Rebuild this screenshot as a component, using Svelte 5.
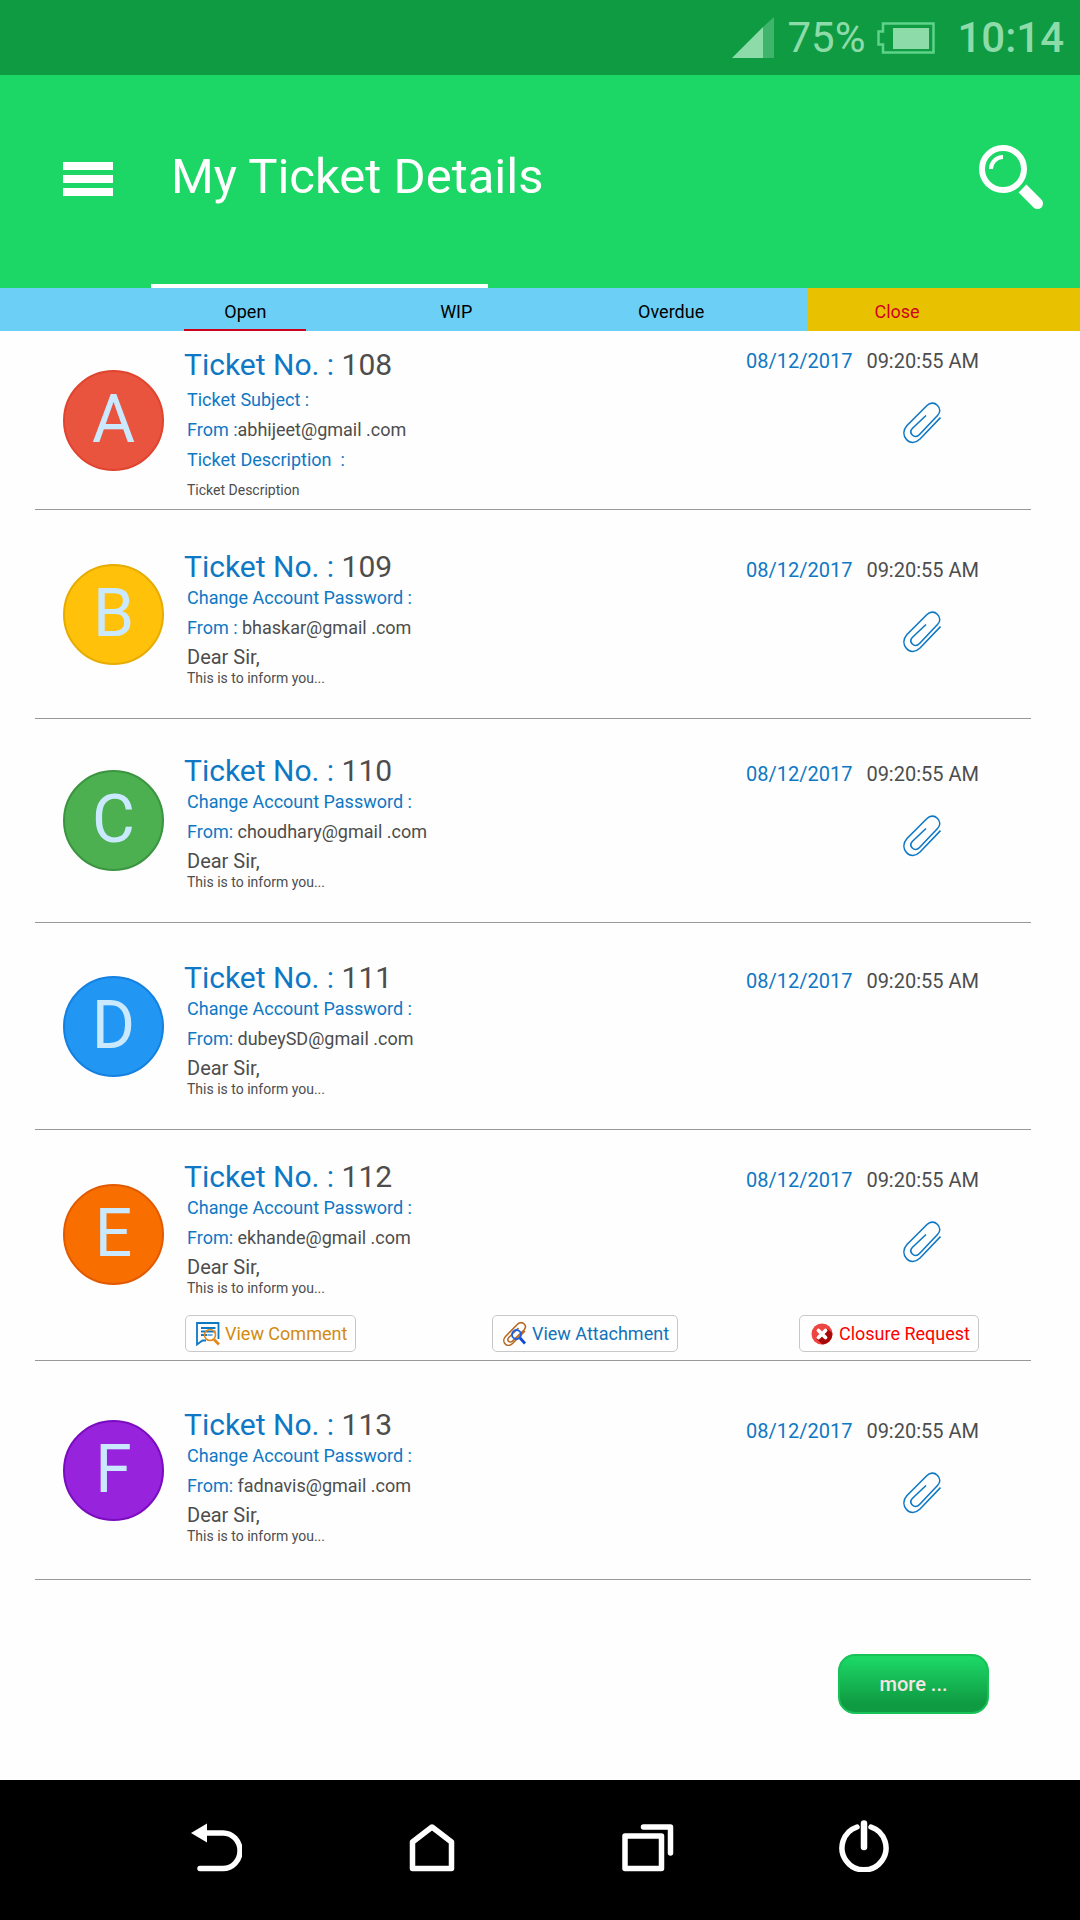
<!-- MyTickets.svelte -->
<script>
    const tabs = [
        { id: 'open', label: 'Open' },
        { id: 'wip', label: 'WIP' },
        { id: 'overdue', label: 'Overdue' },
        { id: 'close', label: 'Close' }
    ];

    let activeTab = $state('open');

    const tickets = [
        {
            no: 108, letter: 'A', date: '08/12/2017', time: '09:20:55 AM',
            subject: 'Ticket Subject :', fromLabel: 'From :', from: 'abhijeet@gmail .com',
            descLabel: 'Ticket Description\u00a0 :', text: 'Ticket Description', attachment: true
        },
        {
            no: 109, letter: 'B', date: '08/12/2017', time: '09:20:55 AM',
            subject: 'Change Account Password :', fromLabel: 'From : ', from: 'bhaskar@gmail .com',
            greeting: 'Dear Sir,', text: 'This is to inform you...', attachment: true
        },
        {
            no: 110, letter: 'C', date: '08/12/2017', time: '09:20:55 AM',
            subject: 'Change Account Password :', fromLabel: 'From: ', from: 'choudhary@gmail .com',
            greeting: 'Dear Sir,', text: 'This is to inform you...', attachment: true
        },
        {
            no: 111, letter: 'D', date: '08/12/2017', time: '09:20:55 AM',
            subject: 'Change Account Password :', fromLabel: 'From: ', from: 'dubeySD@gmail .com',
            greeting: 'Dear Sir,', text: 'This is to inform you...', attachment: false
        },
        {
            no: 112, letter: 'E', date: '08/12/2017', time: '09:20:55 AM',
            subject: 'Change Account Password :', fromLabel: 'From: ', from: 'ekhande@gmail .com',
            greeting: 'Dear Sir,', text: 'This is to inform you...', attachment: true, actions: true
        },
        {
            no: 113, letter: 'F', date: '08/12/2017', time: '09:20:55 AM',
            subject: 'Change Account Password :', fromLabel: 'From: ', from: 'fadnavis@gmail .com',
            greeting: 'Dear Sir,', text: 'This is to inform you...', attachment: true
        }
    ];
</script>

<div class="screen">
    <div class="status-bar">
        <svg width="42" height="42" viewBox="0 0 42 42" aria-hidden="true">
            <path d="M0 41 L31 10 V41 Z" fill="#8edbaa" />
            <path d="M31 10 L42 0 V41 H31 Z" fill="#3fb56b" />
        </svg>
        <span class="percent">75%</span>
        <svg class="battery" width="58" height="32" viewBox="0 0 58 32" aria-hidden="true">
            <path d="M6 1.5 H56.5 V30.5 H6 V22.5 H1.5 V9.5 H6 Z" fill="none" stroke="#5fd38b" stroke-width="2.5" />
            <rect x="16" y="6" width="36" height="21" fill="#8edbaa" />
        </svg>
        <span class="clock">10:14</span>
    </div>

    <header>
        <div class="header-row">
            <button type="button" class="menu" aria-label="Menu">
                <svg width="50" height="34" viewBox="0 0 50 34" fill="#fff">
                    <rect width="50" height="8" />
                    <rect y="13" width="50" height="8" />
                    <rect y="26" width="50" height="8" />
                </svg>
            </button>
            <h1>My Ticket Details</h1>
            <button type="button" aria-label="Search">
                <svg width="65" height="65" viewBox="0 0 65 65" fill="none" stroke="#fff">
                    <circle cx="24" cy="24" r="21" stroke-width="6" />
                    <path d="M12 24 A12 12 0 0 1 24 12" stroke-width="4" />
                    <path d="M43.5 43.5 L58 58" stroke-width="11" />
                    <circle cx="58.5" cy="58.5" r="5.5" fill="#fff" stroke="none" />
                </svg>
            </button>
        </div>
        <div class="header-line"></div>
    </header>

    <nav class="tabs" aria-label="Ticket status">
        {#each tabs as tab}
            <button
                type="button"
                class="tab {tab.id}"
                class:active={activeTab === tab.id}
                onclick={() => (activeTab = tab.id)}
            >
                <span>{tab.label}</span>
            </button>
        {/each}
    </nav>

    <main>
        <ul class="tickets">
            {#each tickets as ticket}
                <li
                    class="ticket ticket-{ticket.letter.toLowerCase()}"
                    class:detailed={ticket.descLabel}
                    class:has-actions={ticket.actions}
                >
                    <div class="avatar">{ticket.letter}</div>
                    <div class="info">
                        <h2>Ticket No. : <span>{ticket.no}</span></h2>
                        <div class="lines">
                            <p class="label">{ticket.subject}</p>
                            <p class="label">{ticket.fromLabel}<span>{ticket.from}</span></p>
                            {#if ticket.descLabel}
                                <p class="label">{ticket.descLabel}</p>
                            {/if}
                            {#if ticket.greeting}
                                <p class="greeting">{ticket.greeting}</p>
                            {/if}
                            <p class="message">{ticket.text}</p>
                        </div>
                    </div>
                    <div class="meta">
                        <div class="when">
                            <span class="date">{ticket.date}</span>
                            <span>{ticket.time}</span>
                        </div>
                        {#if ticket.attachment}
                            <svg class="clip" width="38" height="42" viewBox="0 0 38 42" role="img" aria-label="Has attachment">
                                <path
                                    d="M37.5 15.5 L17 37 C12.5 41.5 7 41.5 3.5 37.5 C0 33.5 0 28 4 23.5 L24 3.5 C27 .5 31.5 .2 34.3 3.3 C37.5 6.5 37.5 10.5 34.5 13.5 L16.5 32.5 C14 35.2 11.3 35 9.3 33 C7.3 31 7.3 28.5 9.5 26.2 L23 13.5"
                                    fill="none" stroke="#0f78c4" stroke-width="1.6"
                                />
                            </svg>
                        {/if}
                    </div>
                    {#if ticket.actions}
                        <div class="actions">
                            <button type="button" class="comment">
                                <svg width="24" height="24" viewBox="0 0 24 24" fill="none">
                                    <path d="M22.5 17 V1 H1 V22.5 L6.5 18.5 H10" stroke="#0f78c4" stroke-width="1.8" />
                                    <path d="M5 6 H19.5 M5 9.5 H19.5 M5 13 H11" stroke="#0f78c4" stroke-width="1.8" />
                                    <circle cx="14" cy="13" r="5.5" stroke="#e08a1e" stroke-width="1.6" />
                                    <path d="M11.5 13 H16.5" stroke="#0f78c4" stroke-width="1.2" />
                                    <path d="M18 17.5 L23 22.5" stroke="#e08a1e" stroke-width="2.8" />
                                </svg>
                                View Comment
                            </button>
                            <button type="button" class="attachment">
                                <svg width="24" height="24" viewBox="0 0 24 24" fill="none">
                                    <path
                                        d="M22 9 L9.5 21.5 C7 24 4 24 2.3 22 C.3 20 .3 16.8 2.5 14.5 L14.5 2.2 C16.5 .2 19.5 .2 21 1.8 C22.8 3.5 22.8 6 21 8 L9.5 19 C8 20.5 6.5 20.3 5.5 19.3 C4.5 18.3 4.5 16.8 5.8 15.5 L15.5 6"
                                        stroke="#b5651d" stroke-width="1.5"
                                    />
                                    <circle cx="13.5" cy="12.5" r="4.5" stroke="#1660e8" stroke-width="1.8" />
                                    <path d="M17 16 L22 21.5" stroke="#1048d8" stroke-width="2.8" />
                                </svg>
                                View Attachment
                            </button>
                            <button type="button" class="closure">
                                <svg width="24" height="24" viewBox="0 0 24 24">
                                    <circle cx="12" cy="12" r="10.5" fill="#ee4540" />
                                    <path d="M17.5 7 L22.3 11 A10.5 10.5 0 0 1 12.5 22.5 L6.5 17 Z" fill="#a80808" />
                                    <path d="M8.5 8.5 L15.5 15.5 M15.5 8.5 L8.5 15.5" stroke="#fff" stroke-width="3.8" stroke-linecap="round" />
                                </svg>
                                Closure Request
                            </button>
                        </div>
                    {/if}
                </li>
            {/each}
        </ul>
        <button type="button" class="more">more ...</button>
    </main>

    <nav class="system-nav" aria-label="System">
        <button type="button" aria-label="Back">
            <svg width="52" height="52" viewBox="0 0 52 52" fill="none" stroke="#fff" stroke-width="5.5" stroke-linecap="round">
                <path d="M16 13 H33 A17 17.7 0 0 1 33 48.5 H10" />
                <path d="M1 13 L17 3.5 V22.5 Z" fill="#fff" stroke="none" />
            </svg>
        </button>
        <button type="button" aria-label="Home">
            <svg width="52" height="52" viewBox="0 0 52 52" fill="none" stroke="#fff" stroke-width="5.5" stroke-linejoin="round">
                <path d="M6.500 48.5 V22 L26 7 L45.5 22 V48.5 Z" />
            </svg>
        </button>
        <button type="button" aria-label="Recent apps">
            <svg width="52" height="52" viewBox="0 0 52 52" fill="none" stroke="#fff" stroke-width="5.5" stroke-linejoin="round" stroke-linecap="round">
                <rect x="3" y="16" width="36.5" height="32.5" />
                <path d="M21.5 7 H48.5 V33" />
            </svg>
        </button>
        <button type="button" aria-label="Power">
            <svg width="52" height="52" viewBox="0 0 52 52" fill="none" stroke="#fff" stroke-width="5.5" stroke-linecap="round">
                <path d="M19 7 A22 22 0 1 0 33 7" />
                <path d="M26 3.500 V27" stroke-width="6.5" />
            </svg>
        </button>
    </nav>
</div>

<style>
    :global(body) {
        background: #fefefe;
    }

    .screen {
        min-height: 100vh;
        display: flex;
        flex-direction: column;
        font-family: Roboto, 'Liberation Sans', sans-serif;
        color: #4d4d4d;
    }

    h1, h2, p, ul {
        margin: 0;
        padding: 0;
        font-weight: 400;
    }

    button {
        font-family: inherit;
        border: none;
        background: none;
        padding: 0;
        cursor: pointer;
    }

    svg {
        display: block;
        flex-shrink: 0;
    }

    .status-bar {
        display: flex;
        align-items: center;
        justify-content: flex-end;
        height: 75px;
        padding-right: 16px;
        background: #0f9b42;
        color: #8edbaa;
        font-size: 42px;
    }

    .percent {
        margin-left: 13px;
    }

    .battery {
        margin: 0 22px 0 12px;
    }

    .clock {
        font-weight: 500;
    }

    header {
        display: flex;
        flex-direction: column;
        height: 213px;
        background: #1cd666;
        color: #fff;
    }

    .header-row {
        display: flex;
        align-items: center;
        padding: 64px 36px 0 63px;
    }

    .menu {
        padding-top: 4px;
    }

    h1 {
        flex: 1;
        margin-left: 58px;
        font-size: 49px;
        line-height: 76px;
    }

    .header-line {
        width: 337px;
        height: 4px;
        margin: auto 0 0 14%;
        background: #fff;
    }

    .tabs {
        display: grid;
        grid-template-columns: 210fr 212fr 246fr 272fr;
        height: 43px;
        padding-left: 13%;
        background: #6ccff6;
    }

    .tab {
        display: flex;
        justify-content: center;
        font-size: 18px;
        color: #000;
    }

    .tab span {
        box-sizing: border-box;
        min-width: 122px;
        height: 43px;
        line-height: 48px;
    }

    .tab.active span {
        border-bottom: 2px solid #d0021b;
    }

    .tab.overdue {
        padding-right: 28px;
    }

    .tab.close {
        padding-right: 94px;
        background: #e8c200;
        color: #d0021b;
    }

    main {
        flex: 1;
        display: flex;
        flex-direction: column;
    }

    .tickets {
        margin: 0 49px 0 35px;
        list-style: none;
    }

    .ticket {
        display: grid;
        grid-template-columns: 101px 1fr auto;
        column-gap: 20px;
        padding: 0 52px 0 28px;
        border-bottom: 1px solid #999;
    }

    .avatar {
        align-self: center;
        box-sizing: border-box;
        width: 101px;
        height: 101px;
        border: 2px solid;
        border-radius: 50%;
        font-size: 66px;
        line-height: 96px;
        text-align: center;
    }

    h2 {
        font-size: 30px;
        line-height: 32px;
        color: #0f78c4;
    }

    h2 span,
    .label span {
        color: #4d4d4d;
    }

    .lines {
        padding-left: 3px;
    }

    .label {
        font-size: 18px;
        line-height: 30px;
        color: #0f78c4;
        white-space: pre-wrap;
    }

    .greeting {
        font-size: 20px;
        line-height: 28px;
    }

    .message {
        font-size: 14px;
        line-height: 14px;
    }

    .when {
        display: flex;
        gap: 14px;
        margin-top: 7px;
        font-size: 20px;
        line-height: 24px;
    }

    .date {
        color: #0f78c4;
    }

    .clip {
        margin: 29px 38px 0 auto;
    }

    .detailed .lines {
        padding-top: 4px;
    }

    .detailed .message {
        line-height: 30px;
    }

    .detailed .when {
        margin-top: 0;
    }

    .ticket-a .avatar { background: #e9543f; border-color: #e0442f; color: #cae9ff; }
    .ticket-b .avatar { background: #ffc10a; border-color: #e6ac00; color: #cae9ff; }
    .ticket-c .avatar { background: #4caf50; border-color: #3b9440; color: #cae9ff; }
    .ticket-d .avatar { background: #2196f3; border-color: #1481e0; color: #cae9ff; }
    .ticket-e .avatar { background: #f86f00; border-color: #e25a00; color: #cae9ff; }
    .ticket-f .avatar { background: #9823dc; border-color: #7a0cc0; color: #cae9ff; }

    .ticket-a .info, .ticket-a .meta { padding: 18px 0 4px; }
    .ticket-b .info, .ticket-b .meta { padding: 41px 0 33px; }
    .ticket-c .info, .ticket-c .meta { padding: 36px 0 33px; }
    .ticket-d .info, .ticket-d .meta { padding: 39px 0 33px; }
    .ticket-e .info, .ticket-e .meta { padding: 31px 0 20px; }
    .ticket-f .info { padding: 48px 0 36px; }
    .ticket-f .meta { padding: 51px 0 33px; }

    .has-actions .avatar {
        grid-row: 1 / 3;
        margin-bottom: 22px;
    }

    .actions {
        grid-column: 2 / 4;
        display: grid;
        grid-template-columns: 1fr 1fr auto;
        justify-items: start;
        padding: 0 0 8px 1px;
    }

    .actions button {
        display: flex;
        align-items: center;
        gap: 5px;
        box-sizing: border-box;
        height: 37px;
        padding: 0 8px 0 10px;
        border: 1px solid #c8c8c8;
        border-radius: 5px;
        font-size: 18px;
    }

    .comment { color: #d28b0f; }
    .attachment { color: #1272b8; }
    .closure { color: #f00; }

    .more {
        align-self: flex-end;
        width: 151px;
        height: 60px;
        margin: 74px 91px 66px 0;
        border: 2px solid #17c257;
        border-radius: 17px;
        background: linear-gradient(#1cd666 5%, #0f9b42 85%);
        color: #f7e4e4;
        font-size: 20px;
        font-weight: 500;
    }

    .system-nav {
        display: grid;
        grid-template-columns: repeat(4, 1fr);
        box-sizing: border-box;
        height: 140px;
        padding: 0 10% 8px;
        background: #000;
    }

    .system-nav button {
        display: flex;
        align-items: center;
        justify-content: center;
    }
</style>
